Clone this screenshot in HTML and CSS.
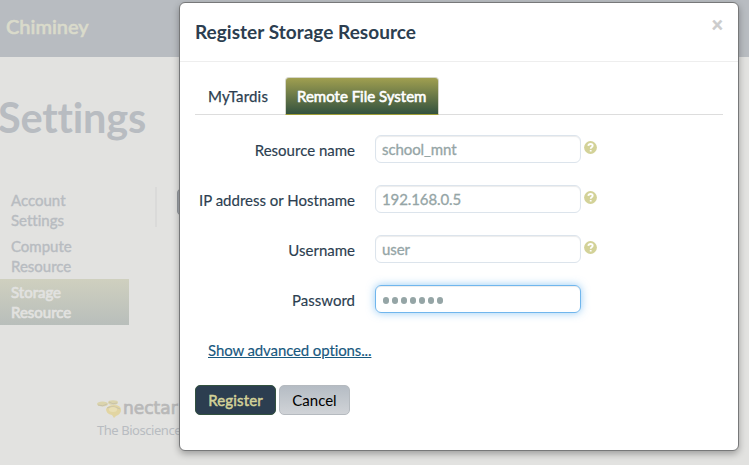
FILE: index.html
```html
<!DOCTYPE html>
<html lang="en">
<head>
<meta charset="utf-8">
<title>Register Storage Resource</title>
<link rel="stylesheet" href="styles.css">
</head>
<body>
<div class="page">
  <header class="navbar"><span class="brand">Chiminey</span></header>
  <h1 class="page-title">Settings</h1>
  <div class="content">
    <nav class="sidebar">
      <a class="side-link">Account<br>Settings</a>
      <a class="side-link">Compute<br>Resource</a>
      <a class="side-link active">Storage<br>Resource</a>
    </nav>
    <div class="divider"></div>
    <div class="page-button"></div>
  </div>
  <footer class="footer">
    <div class="nectar">
      <svg class="bee" width="25" height="20" viewBox="0 0 25 20">
        <ellipse cx="5.500" cy="4" rx="5.500" ry="2.600" fill="#dbd4ad"/>
        <ellipse cx="16" cy="2.500" rx="5" ry="2.300" fill="#dbd4ad"/>
        <path d="M9 9Q11 5 17 5Q24 5 24 10Q24 14 19 16L17 18L15 15Q9 14 9 9Z" fill="#e2d5a2"/>
        <path d="M1 5Q6 7 10 4M12 2Q16 5 20 3M10 8Q16 5 23 9" fill="none" stroke="#c9c3aa" stroke-width="1"/>
        <ellipse cx="16" cy="9.500" rx="4" ry="2.500" fill="#e9dfb5"/>
      </svg>
      <span class="nectar-name">nectar</span>
    </div>
    <p class="footer-text">The Bioscience</p>
  </footer>
</div>

<div class="modal">
  <div class="modal-header">
    <h3 class="modal-title">Register Storage Resource</h3>
    <span class="close">×</span>
  </div>
  <div class="modal-body">
    <div class="tabs">
      <a class="tab">MyTardis</a>
      <a class="tab active">Remote File System</a>
    </div>
    <form class="form">
      <div class="row">
        <label class="label">Resource name</label>
        <div class="input">school_mnt</div>
        <svg class="help" width="13" height="13" viewBox="0 0 13 13"><circle cx="6.500" cy="6.500" r="6.400" fill="#d3d298"/><path d="M4.300 4.900Q4.500 3 6.600 3Q8.700 3 8.700 4.800Q8.700 5.700 7.600 6.300Q6.700 6.800 6.700 7.800M6.700 8.900V10.500" fill="none" stroke="#fff" stroke-width="1.800"/></svg>
      </div>
      <div class="row">
        <label class="label">IP address or Hostname</label>
        <div class="input">192.168.0.5</div>
        <svg class="help" width="13" height="13" viewBox="0 0 13 13"><circle cx="6.500" cy="6.500" r="6.400" fill="#d3d298"/><path d="M4.300 4.900Q4.500 3 6.600 3Q8.700 3 8.700 4.800Q8.700 5.700 7.600 6.300Q6.700 6.800 6.700 7.800M6.700 8.900V10.500" fill="none" stroke="#fff" stroke-width="1.800"/></svg>
      </div>
      <div class="row">
        <label class="label">Username</label>
        <div class="input">user</div>
        <svg class="help" width="13" height="13" viewBox="0 0 13 13"><circle cx="6.500" cy="6.500" r="6.400" fill="#d3d298"/><path d="M4.300 4.900Q4.500 3 6.600 3Q8.700 3 8.700 4.800Q8.700 5.700 7.600 6.300Q6.700 6.800 6.700 7.800M6.700 8.900V10.500" fill="none" stroke="#fff" stroke-width="1.800"/></svg>
      </div>
      <div class="row">
        <label class="label">Password</label>
        <div class="input focused"><i class="dot"></i><i class="dot"></i><i class="dot"></i><i class="dot"></i><i class="dot"></i><i class="dot"></i><i class="dot"></i></div>
      </div>
    </form>
    <a class="advanced">Show advanced options...</a>
    <div class="actions">
      <span class="btn primary">Register</span>
      <span class="btn">Cancel</span>
    </div>
  </div>
</div>
</body>
</html>
```
FILE: styles.css
```css
* { box-sizing: border-box; }
body {
  margin: 0;
  height: 465px;
  overflow: hidden;
  background: #e2e2e0;
  color: #2c3e50;
  font: 15px/20px Lato, sans-serif;
  font-variant-ligatures: none;
}
.page { height: 465px; overflow: hidden; color: #b8bcc1; }
.navbar { height: 57px; padding: 16px 6px; background: #b8bcc1; }
.brand { font-size: 20px; font-weight: 500; color: #dadbcb; -webkit-text-stroke: .6px #dadbcb; }
.page-title { margin: 37px 0 0 -2px; font-size: 41.500px; line-height: 47px; height: 48px; font-weight: 700; letter-spacing: -.2px; }
.content { display: flex; height: 140px; margin-top: 45px; }
.sidebar { width: 129px; }
.side-link {
  display: block;
  height: 46px;
  padding: 3px 0 0 11px;
  line-height: 20px;
  -webkit-text-stroke: .4px;
}
.side-link.active { color: #e2e2e0; background: linear-gradient(#cfd0bf, #b8bebb); -webkit-text-stroke: .7px; }
.divider { width: 2px; height: 40px; margin-left: 26px; background: #dadad9; }
.page-button { width: 30px; height: 28px; margin: 1px 0 0 20px; border-radius: 5px; background: #a4a9b0; border: 1px solid #969a9f; }
.footer { margin: 73px 0 0 97px; }
.nectar { display: flex; height: 20px; }
.nectar-name {
  margin-left: 1px;
  font: 400 17px/17px "DejaVu Sans", sans-serif;
  color: #b8b8b8;
  -webkit-text-stroke: .7px;
}
.footer-text { margin: 0; font: 13px/20px "Noto Sans", sans-serif; letter-spacing: -.45px; }

.modal {
  position: absolute;
  left: 179px;
  top: 2px;
  width: 560px;
  height: 449px;
  border: 1px solid #777879;
  border-radius: 6px;
  background: #fff;
  box-shadow: 0 3px 7px rgba(0, 0, 0, .3);
}
.modal-header {
  display: flex;
  justify-content: space-between;
  height: 59px;
  padding: 14px 15px 0;
  border-bottom: 1px solid #eee;
}
.modal-title { margin: 0; font-size: 19px; line-height: 30px; font-weight: 700; letter-spacing: .03px; }
.close { font-size: 20px; line-height: 14px; font-weight: 900; color: #ccc; -webkit-text-stroke: .4px; }
.modal-body { padding: 15px 15px 0; }
.tabs { display: flex; height: 38px; border-bottom: 1px solid #ddd; }
.tab { width: 86px; height: 38px; padding: 9px 0 0 13px; -webkit-text-stroke: .25px; letter-spacing: .2px; }
.tab.active {
  width: 154px;
  margin-left: 4px;
  padding: 8px 0 0 11px;
  white-space: nowrap;
  color: #fff;
  border: 1px solid #d5d6ca;
  border-bottom-color: #a09d36;
  border-radius: 4px 4px 0 0;
  background: linear-gradient(#a09f50, #33523f);
  -webkit-text-stroke: .6px;
  letter-spacing: 0;
}
.form { display: grid; gap: 22px; margin-top: 20px; }
.row { display: flex; height: 28px; }
.label { width: 160px; padding-top: 5px; text-align: right; white-space: nowrap; -webkit-text-stroke: .15px; }
.input {
  width: 206px;
  height: 28px;
  margin-left: 20px;
  padding: 3px 6px;
  border: 1px solid #dce4ec;
  border-radius: 6px;
  color: #95a5a6;
  box-shadow: inset 0 1px 1px rgba(0, 0, 0, .075);
  -webkit-text-stroke: .3px;
  letter-spacing: -.1px;
}
.input.focused {
  display: flex;
  align-items: center;
  gap: 2.700px;
  padding: 3px 7px 0;
  border-color: #70b6ed;
  box-shadow: inset 0 1px 1px rgba(0, 0, 0, .075), 0 0 8px rgba(82, 168, 236, .6);
}
.dot { width: 6.300px; height: 6.300px; border-radius: 50%; background: #95a5a6; }
.help { margin: 6px 0 0 3px; }
.advanced { display: block; margin: 27px 0 0 13px; color: #18587e; text-decoration: underline; letter-spacing: -.12px; -webkit-text-stroke: .15px; }
.actions { display: flex; gap: 3px; margin-top: 25px; }
.btn {
  width: 71px;
  height: 30px;
  padding: 4px 0;
  text-align: center;
  line-height: 20px;
  color: #000;
  border: 1px solid #b5babf;
  border-radius: 5px;
  background: linear-gradient(#b5bcc4, #d0d3d7);
}
.btn.primary { width: 81px; color: #d3d298; border-color: #33523f; background: #2c3e50; -webkit-text-stroke: .5px; letter-spacing: .15px; }
```
